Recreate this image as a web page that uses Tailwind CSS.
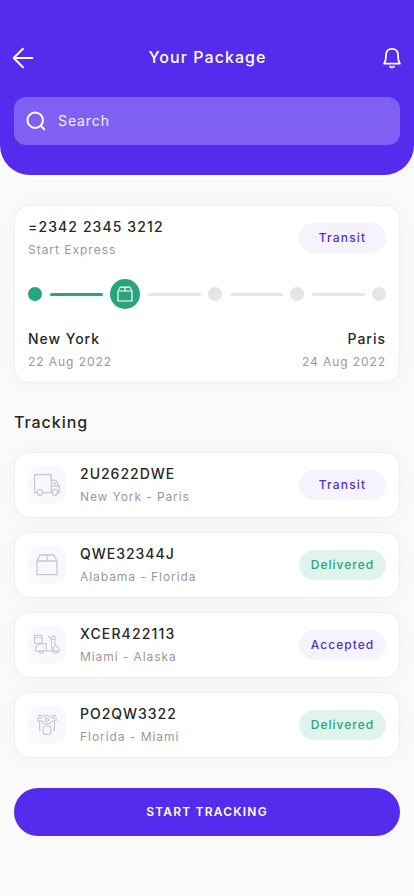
<!DOCTYPE html>
<html lang="en">
<head>
<meta charset="utf-8">
<meta name="viewport" content="width=device-width, initial-scale=1">
<title>Your Package</title>
<script src="https://cdn.jsdelivr.net/npm/@tailwindcss/browser@4"></script>
</head>
<body class="bg-[#fafafa] font-['Inter',sans-serif] text-[#272727]">
<div class="w-[414px] h-[896px] overflow-hidden">
  <header class="h-[175px] rounded-b-[30px] bg-[#552bee] px-3.5 pt-[45px] text-white">
    <div class="-mx-0.5 flex h-6 items-center justify-between">
      <svg class="mt-0.5 size-[22px]" viewBox="0 0 22 22" fill="none" stroke="currentColor" stroke-width="1.9" stroke-linecap="round" stroke-linejoin="round"><path d="M20.4 11H1.8M11 1.7L1.6 11L11 20.3"/></svg>
      <h1 class="text-base leading-6 font-medium tracking-[1.05px]">Your Package</h1>
      <svg class="-mr-px mt-0.5 size-[22px]" viewBox="0 0 22 22" fill="none" stroke="currentColor" stroke-width="1.8" stroke-linecap="round" stroke-linejoin="round"><path d="M3 16.6C4.5 15 4.9 12.8 4.9 8.6C4.9 4 7.5 1.8 11 1.8C14.5 1.8 17.1 4 17.1 8.6C17.1 12.8 17.5 15 19 16.6Z"/><path d="M9 19.4C9.8 20.6 12.2 20.6 13 19.4"/></svg>
    </div>
    <div class="mt-7 flex h-12 items-center gap-3 rounded-xl bg-[#7e60f2] pl-3">
      <svg class="size-5" viewBox="0 0 20 20" fill="none" stroke="currentColor" stroke-width="2" stroke-linecap="round"><circle cx="9.2" cy="9.2" r="7.7"/><path d="M14.8 14.8L18.2 18.2"/></svg>
      <span class="text-sm tracking-[0.9px] text-white/90">Search</span>
    </div>
  </header>

  <main class="px-3.5 pt-[30px]">
    <section class="h-[178px] rounded-[15px] border border-[#eeeeee] bg-white px-[13px] pt-2.5 shadow-[0_0_24px_rgba(0,0,0,0.035)]">
      <div class="flex justify-between">
        <div>
          <p class="text-sm leading-[22px] font-medium tracking-[1.1px]">=2342 2345 3212</p>
          <p class="mt-px text-xs leading-[22px] tracking-[0.98px] text-[#999]">Start Express</p>
        </div>
        <span class="mt-[7px] flex h-[30px] w-[87px] items-center justify-center rounded-full bg-[#f5f3fe] text-xs font-medium tracking-[1.15px] text-[#5332c8]">Transit</span>
      </div>
      <div class="mt-[18px] flex h-[30px] items-center justify-between">
        <i class="size-3.5 rounded-full bg-[#27a57c]"></i>
        <i class="h-[3px] w-[53px] rounded-full bg-[#27a57c]"></i>
        <span class="flex size-[30px] items-center justify-center rounded-full bg-[#27a57c] text-white">
          <svg class="size-4" viewBox="0 0 16 16" fill="none" stroke="currentColor" stroke-width="1.2" stroke-linejoin="round"><path d="M1 5V15H15V5L12.8 1.2H3.2L1 5H15M8 1.2V5"/></svg>
        </span>
        <i class="h-[3px] w-[53px] rounded-full bg-[#e6e6e6]"></i>
        <i class="size-3.5 rounded-full bg-[#e4e5e5]"></i>
        <i class="h-[3px] w-[53px] rounded-full bg-[#e6e6e6]"></i>
        <i class="size-3.5 rounded-full bg-[#e4e5e5]"></i>
        <i class="h-[3px] w-[53px] rounded-full bg-[#e6e6e6]"></i>
        <i class="size-3.5 rounded-full bg-[#e4e5e5]"></i>
      </div>
      <div class="mt-[19px] flex justify-between">
        <div>
          <p class="text-sm leading-[22px] font-medium tracking-[0.95px]">New York</p>
          <p class="mt-px text-xs leading-[22px] tracking-[0.93px] text-[#999]">22 Aug 2022</p>
        </div>
        <div class="text-right">
          <p class="text-sm leading-[22px] font-medium tracking-[1px]">Paris</p>
          <p class="mt-px text-xs leading-[22px] tracking-[0.93px] text-[#999]">24 Aug 2022</p>
        </div>
      </div>
    </section>

    <h2 class="mt-[27px] text-base leading-6 font-medium tracking-[0.95px]">Tracking</h2>

    <ul class="mt-[18px] flex flex-col gap-3.5">
      <li class="flex h-[66px] items-center rounded-[15px] border border-[#eeeeee] bg-white px-[13px] shadow-[0_0_24px_rgba(0,0,0,0.035)]">
        <span class="flex size-[38px] items-center justify-center rounded-xl bg-[#f9f8fe] text-[#c8c5d5]">
          <svg class="size-[26px]" viewBox="0 0 26 26" fill="none" stroke="currentColor" stroke-width="1.25" stroke-linejoin="round"><path d="M3.2 20.5H1.2Q.6 20.5.6 19.9V3.1Q.6 2.5 1.2 2.5H16.6Q17.2 2.5 17.2 3.1V20.5H8.6M17.2 8H20.6Q21.6 8 22.2 9L25.2 14.2V20.5H23.5M18.4 11H20.8L22.5 14.2H25M17.2 14.2H22.5"/><ellipse cx="5.9" cy="20.3" rx="2.7" ry="3"/><ellipse cx="20.9" cy="20.3" rx="2.7" ry="3"/></svg>
        </span>
        <div class="ml-3.5 flex-1">
          <p class="text-sm leading-[22px] font-medium tracking-[1px]">2U2622DWE</p>
          <p class="mt-px text-xs leading-[22px] tracking-[0.9px] text-[#999]">New York - Paris</p>
        </div>
        <span class="flex h-[30px] w-[87px] items-center justify-center rounded-full bg-[#f5f3fe] text-xs font-medium tracking-[1.15px] text-[#5332c8]">Transit</span>
      </li>
      <li class="flex h-[66px] items-center rounded-[15px] border border-[#eeeeee] bg-white px-[13px] shadow-[0_0_24px_rgba(0,0,0,0.035)]">
        <span class="flex size-[38px] items-center justify-center rounded-xl bg-[#f9f8fe] text-[#c8c5d5]">
          <svg class="size-[26px]" viewBox="0 0 26 26" fill="none" stroke="currentColor" stroke-width="1.3" stroke-linejoin="round"><path d="M3 9V22.6H23V9L19.8 3H6.2L3 9H23M13 3V9"/></svg>
        </span>
        <div class="ml-3.5 flex-1">
          <p class="text-sm leading-[22px] font-medium tracking-[1px]">QWE32344J</p>
          <p class="mt-px text-xs leading-[22px] tracking-[0.94px] text-[#999]">Alabama - Florida</p>
        </div>
        <span class="flex h-[30px] w-[87px] items-center justify-center rounded-full bg-[#e0f3ec] text-xs font-medium tracking-[1.03px] text-[#2ba57d]">Delivered</span>
      </li>
      <li class="flex h-[66px] items-center rounded-[15px] border border-[#eeeeee] bg-white px-[13px] shadow-[0_0_24px_rgba(0,0,0,0.035)]">
        <span class="flex size-[38px] items-center justify-center rounded-xl bg-[#f9f8fe] text-[#c8c5d5]">
          <svg class="size-[26px]" viewBox="0 0 26 26" fill="none" stroke="currentColor" stroke-width="1.1" stroke-linejoin="round" stroke-linecap="round"><path d="M.6 3.4H8V11.2H.6ZM.6 5.8H8M4.8 19H2.2Q1.4 19 1.6 17.8Q2.2 11.6 7.4 11.6H12.4V19H9.2M12.4 18.9H18.2L17 7.2M18.4 4.4H21V7.4H18Q16.2 7.2 16.2 5.8ZM16.2 5.8L14.4 4.6M20.4 7.4L21.4 13.6Q25 15.2 25.4 19H24M19.6 19Q18.6 14.6 21.4 13.6"/><path d="M4.8 19.1A2.7 3 0 0 0 10 19.1ZM19.2 19.1A2.7 3 0 0 0 24.4 19.1Z"/></svg>
        </span>
        <div class="ml-3.5 flex-1">
          <p class="text-sm leading-[22px] font-medium tracking-[1.15px]">XCER422113</p>
          <p class="mt-px text-xs leading-[22px] tracking-[0.92px] text-[#999]">Miami - Alaska</p>
        </div>
        <span class="flex h-[30px] w-[87px] items-center justify-center rounded-full bg-[#f5f3fe] text-xs font-medium tracking-[1.03px] text-[#5332c8]">Accepted</span>
      </li>
      <li class="flex h-[66px] items-center rounded-[15px] border border-[#eeeeee] bg-white px-[13px] shadow-[0_0_24px_rgba(0,0,0,0.035)]">
        <span class="flex size-[38px] items-center justify-center rounded-xl bg-[#f9f8fe] text-[#c8c5d5]">
          <svg class="size-[26px]" viewBox="0 0 26 26" fill="none" stroke="currentColor" stroke-width="1.2" stroke-linejoin="round" stroke-linecap="round"><path d="M4 3.5H8M18 3.5H22M6 3.5V6M20 3.5V6M3.6 8.2Q3.6 6 6 6H8Q10 3.4 13 3.4Q16 3.4 18 6H20Q22.4 6 22.4 8.2Q20.4 9.2 18.2 9.2Q16 12.2 13 12.2Q10 12.2 7.8 9.2Q5.6 9.2 3.6 8.2Z"/><circle cx="13" cy="7.8" r="1.6"/><rect x="9.2" y="14" width="7.6" height="8.4" rx="1.5"/><path d="M5.6 9.5V18.2H6.8M20.4 9.5V18.2H19.2"/></svg>
        </span>
        <div class="ml-3.5 flex-1">
          <p class="text-sm leading-[22px] font-medium tracking-[1px]">PO2QW3322</p>
          <p class="mt-px text-xs leading-[22px] tracking-[0.95px] text-[#999]">Florida - Miami</p>
        </div>
        <span class="flex h-[30px] w-[87px] items-center justify-center rounded-full bg-[#e0f3ec] text-xs font-medium tracking-[1.03px] text-[#2ba57d]">Delivered</span>
      </li>
    </ul>

    <button class="mt-[30px] flex h-12 w-full items-center justify-center rounded-full bg-[#552bee] text-xs font-semibold tracking-[1.2px] text-white">START TRACKING</button>
  </main>
</div>
</body>
</html>
